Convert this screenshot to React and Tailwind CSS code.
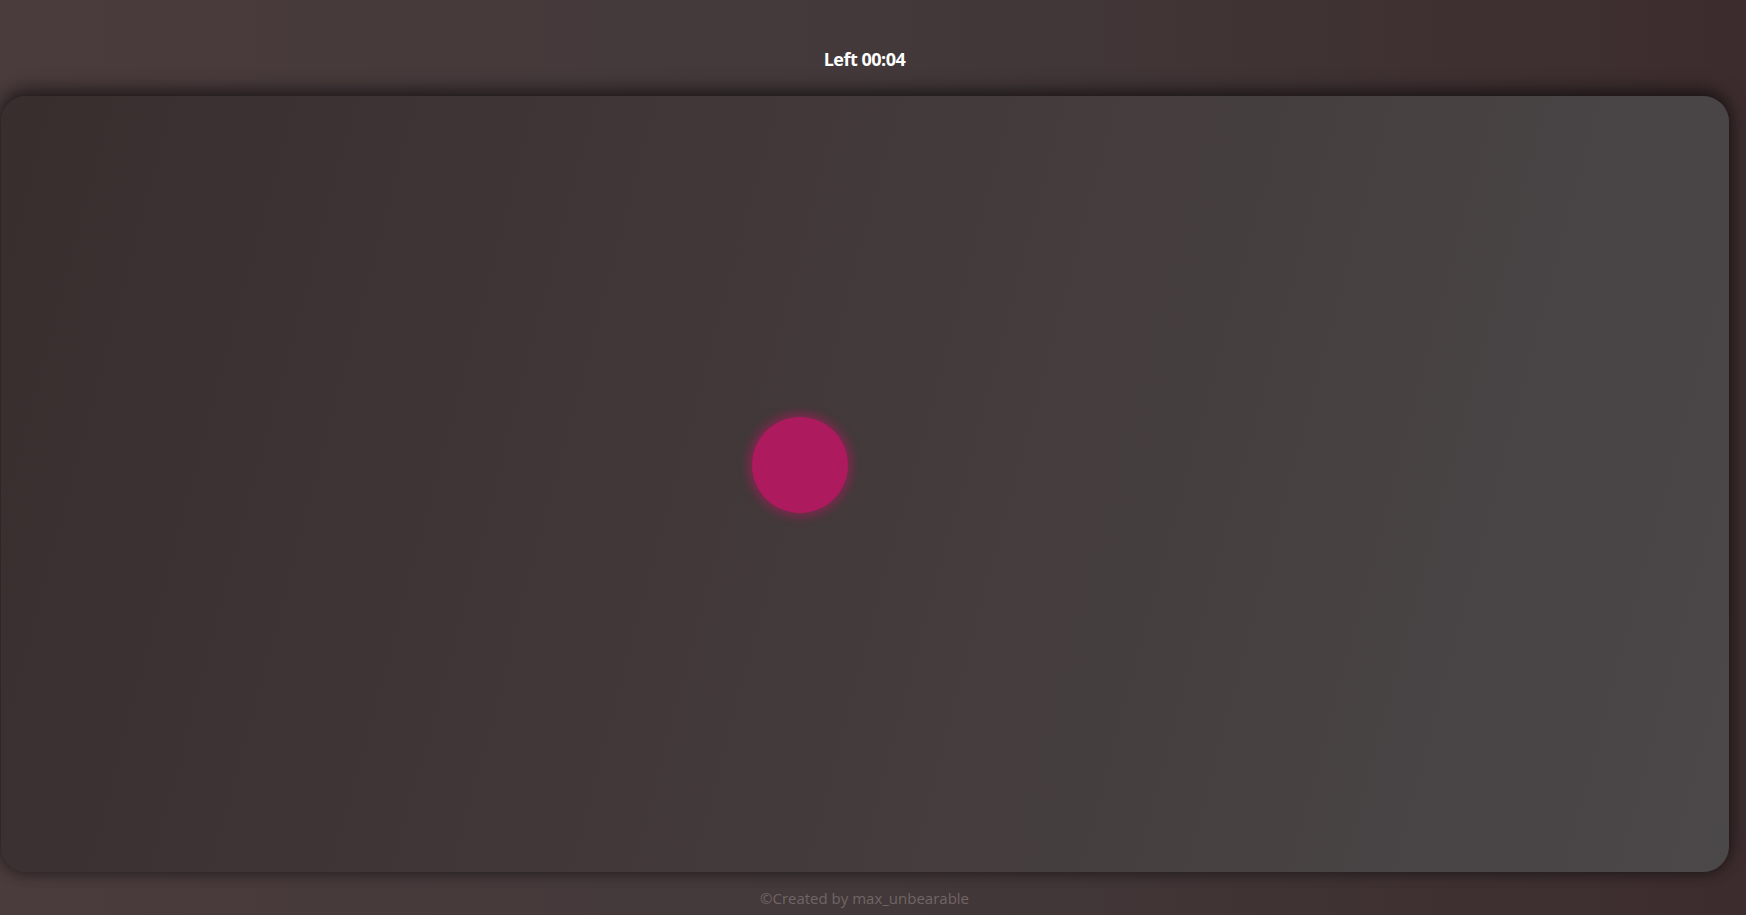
export default function App() {
  return (
    <div className="min-h-[915px] w-full overflow-hidden bg-gradient-to-r from-[#4a3b3c] via-[#43393a] to-[#3c2c2d] font-['Open_Sans','Liberation_Sans',sans-serif]">
      <div className="w-[1729px]">
        <h1 className="pt-[47px] text-center text-[18px] font-bold leading-6 tracking-[-0.5px] text-white">
          Left 00:04
        </h1>

        <div className="relative ml-px mt-[25px] h-[776px] w-[1728px] rounded-[26px] bg-linear-[105deg] from-[#382e2e] via-[#433a3b] to-[#4b4849] shadow-[0_-6px_18px_rgba(0,0,0,0.55),0_4px_12px_rgba(0,0,0,0.25)]">
          <div className="absolute left-[751px] top-[321px] h-[96px] w-[96px] rounded-full bg-[#ad1a5e] shadow-[0_0_10px_4px_rgba(200,20,100,0.45)]" />
        </div>

        <footer className="mt-[16px] text-center text-[15px] leading-5 text-[#716566]">
          ©Created by max_unbearable
        </footer>
      </div>
    </div>
  );
}
